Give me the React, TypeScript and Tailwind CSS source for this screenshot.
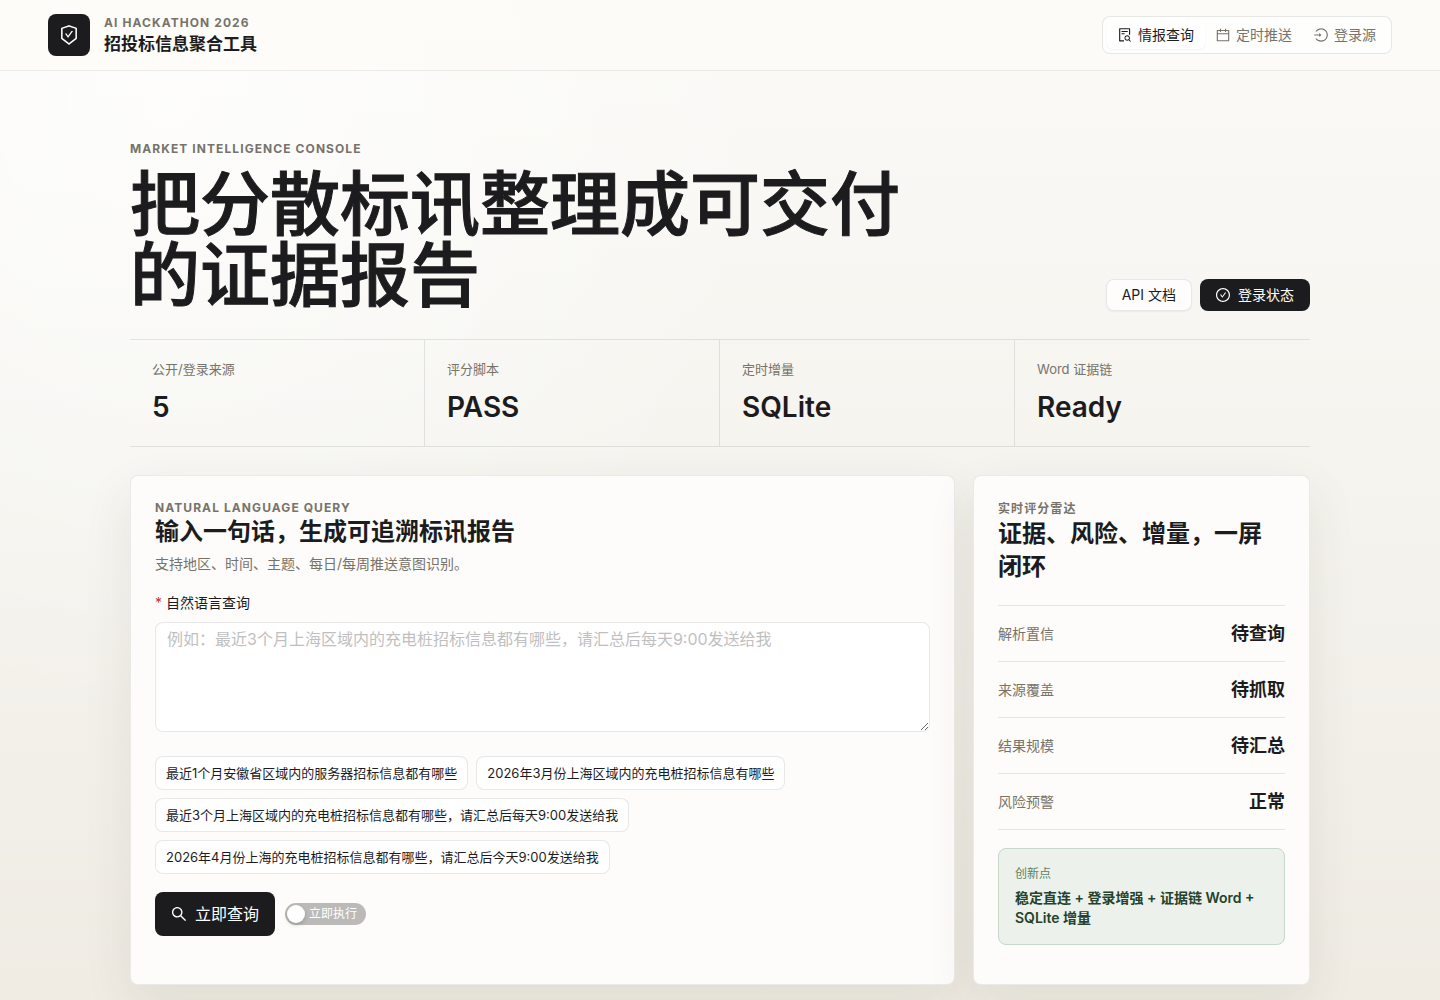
import { useState } from 'react'
import clsx from 'clsx'
import {
  AiOutlineCalendar,
  AiOutlineCheckCircle,
  AiOutlineFileSearch,
  AiOutlineLogin,
  AiOutlineSafetyCertificate,
  AiOutlineSearch,
} from 'react-icons/ai'

const NAV_ITEMS = [
  { key: 'query', label: '情报查询', icon: AiOutlineFileSearch },
  { key: 'schedule', label: '定时推送', icon: AiOutlineCalendar },
  { key: 'login', label: '登录源', icon: AiOutlineLogin },
]

const METRICS = [
  { label: '公开/登录来源', value: '5' },
  { label: '评分脚本', value: 'PASS' },
  { label: '定时增量', value: 'SQLite' },
  { label: 'Word 证据链', value: 'Ready' },
]

const EXAMPLES = [
  '最近1个月安徽省区域内的服务器招标信息都有哪些',
  '2026年3月份上海区域内的充电桩招标信息有哪些',
  '最近3个月上海区域内的充电桩招标信息都有哪些，请汇总后每天9:00发送给我',
  '2026年4月份上海的充电桩招标信息都有哪些，请汇总后今天9:00发送给我',
]

const RADAR = [
  { label: '解析置信', value: '待查询' },
  { label: '来源覆盖', value: '待抓取' },
  { label: '结果规模', value: '待汇总' },
  { label: '风险预警', value: '正常' },
]

const PANEL =
  'min-h-[510px] rounded-lg border border-[#1c1c1e]/8 bg-[#fdfcfa] p-6 shadow-[0_18px_50px_rgba(58,50,38,0.09)]'

function Eyebrow({ children, className }: { children: string; className?: string }) {
  return <p className={clsx('text-xs font-bold tracking-[0.09em] text-[#77736a]', className)}>{children}</p>
}

function Header() {
  const [active, setActive] = useState('query')

  return (
    <header className="flex items-center justify-between border-b border-[#1c1c1e]/8 bg-[#fcfbf7]/80 px-12 py-[14px]">
      <div className="flex items-center gap-[14px]">
        <div className="flex size-[42px] items-center justify-center rounded-lg bg-[#1c1c1e] text-white">
          <AiOutlineSafetyCertificate size={22} />
        </div>
        <div>
          <Eyebrow className="leading-[18px]">AI HACKATHON 2026</Eyebrow>
          <p className="text-[17px] leading-6 font-semibold">招投标信息聚合工具</p>
        </div>
      </div>
      <nav className="flex rounded-lg border border-[#1c1c1e]/10 bg-white/70 p-1">
        {NAV_ITEMS.map(({ key, label, icon: Icon }) => (
          <button
            key={key}
            type="button"
            onClick={() => setActive(key)}
            className={clsx(
              'flex h-7 items-center gap-[6px] rounded-md px-[11px] text-sm',
              active === key ? 'bg-white text-[#1c1c1e] shadow-xs' : 'text-[#77736a]'
            )}
          >
            <Icon size={16} className="-m-px" />
            {label}
          </button>
        ))}
      </nav>
    </header>
  )
}

function Hero() {
  return (
    <section className="flex items-end justify-between">
      <div className="max-w-[820px]">
        <Eyebrow className="leading-5">MARKET INTELLIGENCE CONSOLE</Eyebrow>
        <h1 className="mt-[10px] text-[70px] leading-[71px] font-medium [-webkit-text-stroke:1px_#1c1c1e]">
          把分散标讯整理成可交付的证据报告
        </h1>
      </div>
      <div className="flex gap-2 text-sm">
        <a
          href="#docs"
          className="flex h-8 items-center rounded-lg border border-[#1c1c1e]/10 bg-white/80 px-[15px] shadow-xs"
        >
          API 文档
        </a>
        <button type="button" className="flex h-8 items-center gap-2 rounded-lg bg-[#1c1c1e] px-4 text-white">
          <AiOutlineCheckCircle size={16} className="-m-px" />
          登录状态
        </button>
      </div>
    </section>
  )
}

function Metrics() {
  return (
    <dl className="mt-7 grid grid-cols-4 divide-x divide-[#1c1c1e]/10 border-y border-[#1c1c1e]/10">
      {METRICS.map((metric) => (
        <div key={metric.label} className="px-[22px] py-5">
          <dt className="text-[13px] leading-[18px] text-[#77736a]">{metric.label}</dt>
          <dd className="mt-[10px] text-[28px] leading-[38px] font-semibold">{metric.value}</dd>
        </div>
      ))}
    </dl>
  )
}

function QueryPanel() {
  const [query, setQuery] = useState('')
  const [runNow, setRunNow] = useState(false)

  return (
    <section className={PANEL}>
      <Eyebrow className="leading-4">NATURAL LANGUAGE QUERY</Eyebrow>
      <h2 className="text-2xl leading-8 font-semibold">输入一句话，生成可追溯标讯报告</h2>
      <p className="mt-1 text-sm leading-6 text-[#77736a]">支持地区、时间、主题、每日/每周推送意图识别。</p>

      <form onSubmit={(e) => e.preventDefault()}>
        <label htmlFor="query" className="mt-4 flex gap-1 text-sm leading-[22px]">
          <span className="text-[#c0392b]">*</span>
          自然语言查询
        </label>
        <textarea
          id="query"
          value={query}
          onChange={(e) => setQuery(e.target.value)}
          placeholder="例如：最近3个月上海区域内的充电桩招标信息都有哪些，请汇总后每天9:00发送给我"
          className="mt-2 block h-[110px] w-full resize-y rounded-lg border border-[#1c1c1e]/10 bg-white px-[11px] py-1 text-base leading-6 outline-none placeholder:text-[#bfbfbf]"
        />

        <div className="mt-6 flex flex-wrap gap-2">
          {EXAMPLES.map((example) => (
            <button
              key={example}
              type="button"
              onClick={() => setQuery(example)}
              className="h-[34px] rounded-lg border border-[#1c1c1e]/10 bg-white px-[10px] pt-px text-[13px]"
            >
              {example}
            </button>
          ))}
        </div>

        <div className="mt-[18px] flex items-center gap-[10px]">
          <button
            type="submit"
            className="flex h-11 items-center gap-2 rounded-lg bg-[#1c1c1e] px-4 text-base text-white"
          >
            <AiOutlineSearch size={18} className="-m-px" />
            立即查询
          </button>
          <label
            className={clsx(
              'flex h-[22px] cursor-pointer items-center rounded-full p-[2px] text-xs text-white',
              runNow ? 'flex-row-reverse bg-[#1c1c1e]' : 'bg-[#bbbab8]'
            )}
          >
            <input
              type="checkbox"
              role="switch"
              checked={runNow}
              onChange={(e) => setRunNow(e.target.checked)}
              className="size-[18px] appearance-none rounded-full bg-white shadow-[0_2px_4px_rgba(0,35,11,0.2)]"
            />
            <span className={runNow ? 'pr-1 pl-[7px]' : 'pr-[7px] pl-1'}>立即执行</span>
          </label>
        </div>
      </form>
    </section>
  )
}

function RadarPanel() {
  return (
    <aside className={PANEL}>
      <Eyebrow className="leading-[17px]">实时评分雷达</Eyebrow>
      <h2 className="text-2xl leading-[33px] font-semibold">证据、风险、增量，一屏闭环</h2>

      <dl className="mt-[22px] border-t border-[#1c1c1e]/10">
        {RADAR.map((item) => (
          <div key={item.label} className="flex h-14 items-center justify-between border-b border-[#1c1c1e]/10">
            <dt className="text-sm text-[#77736a]">{item.label}</dt>
            <dd className="text-lg font-semibold">{item.value}</dd>
          </div>
        ))}
      </dl>

      <div className="mt-[18px] rounded-lg border border-[#c5d8c9] bg-[#ecf1eb] p-4">
        <p className="text-xs leading-[18px] text-[#5b8264]">创新点</p>
        <p className="mt-[5px] text-sm leading-5 font-semibold text-[#24422c]">
          稳定直连 + 登录增强 + 证据链 Word + SQLite 增量
        </p>
      </div>
    </aside>
  )
}

export default function App() {
  return (
    <div
      lang="zh-CN"
      className="min-h-screen bg-[radial-gradient(circle_at_12%_10%,rgba(255,255,255,0.7),transparent_40%),linear-gradient(180deg,#fbfaf7_0%,#f5f4ef_45%,#f0ece4_100%)] font-['Inter','Noto_Sans_CJK_SC',sans-serif] text-[#1c1c1e]"
    >
      <Header />
      <main className="mx-auto max-w-[1180px] pt-17 pb-4">
        <Hero />
        <Metrics />
        <div className="mt-7 grid grid-cols-[minmax(0,1fr)_337px] gap-[18px]">
          <QueryPanel />
          <RadarPanel />
        </div>
      </main>
    </div>
  )
}
